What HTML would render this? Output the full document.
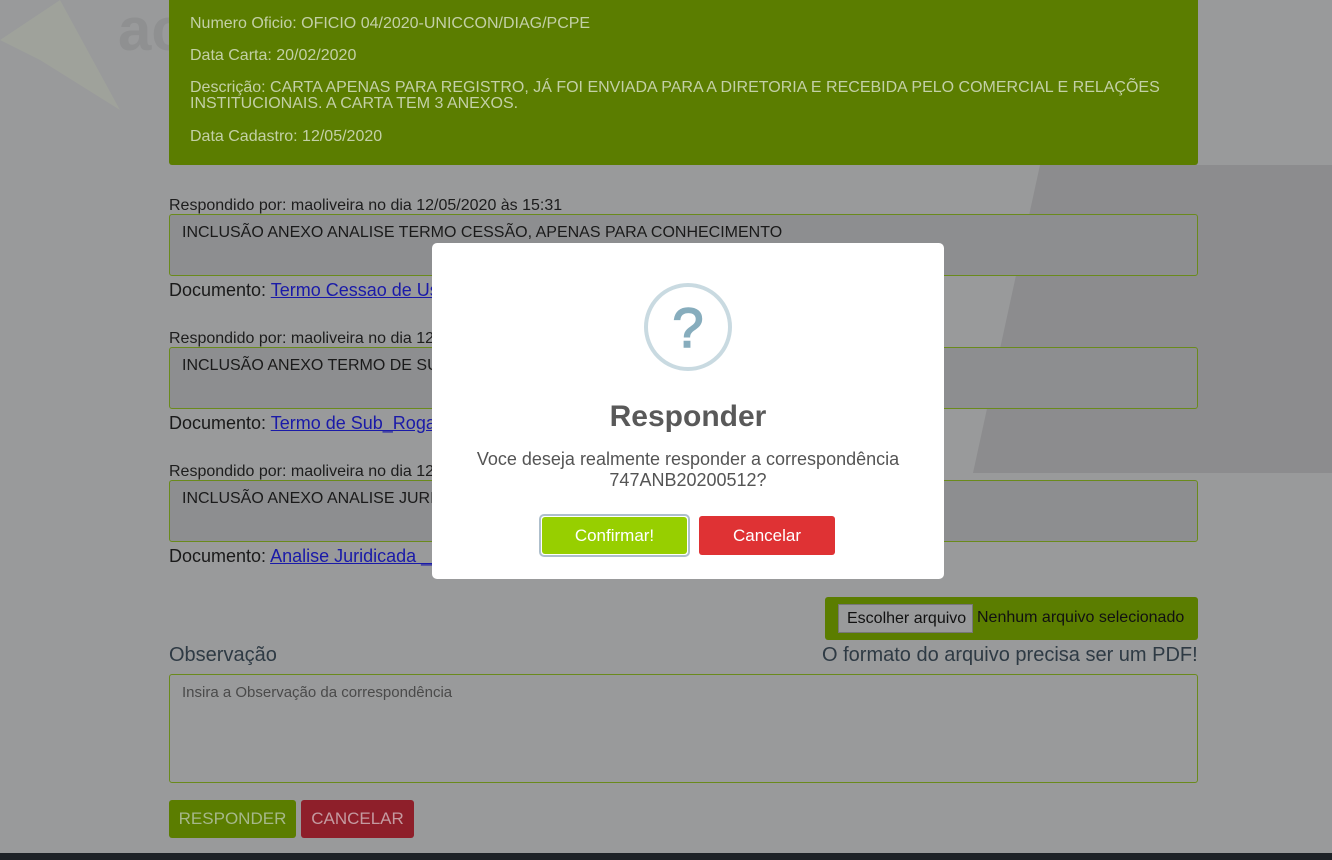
<!DOCTYPE html>
<html><head><meta charset="utf-8"><style>
*{box-sizing:border-box;margin:0;padding:0}
body{width:1332px;height:860px;overflow:hidden;background:#999a9b;font-family:"Liberation Sans",sans-serif;position:relative}
.abs{position:absolute}
.g{color:#c3d0a6;font-size:16px;white-space:nowrap}
.lab{font-size:16px;color:#1d1d1d}
.ta{position:absolute;left:169px;width:1029px;height:62px;background:#8d8e90;border:1px solid #6a8a1c;border-radius:3px;font-size:16px;color:#1a1a1a;padding:9px 12px}
.doc{font-size:18px;color:#1a1a1a}
.doc a{color:#1a1aa8;text-decoration:underline}
</style></head><body>
<svg class="abs" style="left:0;top:0" width="1332" height="860">
<polygon points="1040,165 1332,165 1332,473 973,473" fill="#8c8c8e"/>
<polygon points="0,40 60,0 120,110 40,60" fill="#9fa29b"/>
</svg>
<div class="abs" style="left:118px;top:0px;font-size:60px;font-weight:bold;color:#8f9091;line-height:60px">ac</div>
<div class="abs" style="left:169px;top:-10px;width:1029px;height:175px;background:#5b7d00;border-radius:3px"></div>
<div class="abs g" style="left:190px;top:15px">Numero Oficio: OFICIO 04/2020-UNICCON/DIAG/PCPE</div>
<div class="abs g" style="left:190px;top:47px">Data Carta: 20/02/2020</div>
<div class="abs g" style="left:190px;top:80px;line-height:16px">Descrição: CARTA APENAS PARA REGISTRO, JÁ FOI ENVIADA PARA A DIRETORIA E RECEBIDA PELO COMERCIAL E RELAÇÕES<br>INSTITUCIONAIS. A CARTA TEM 3 ANEXOS.</div>
<div class="abs g" style="left:190px;top:128px">Data Cadastro: 12/05/2020</div>

<div class="abs lab" style="left:169px;top:197px">Respondido por: maoliveira no dia 12/05/2020 às 15:31</div>
<div class="ta" style="top:214px">INCLUSÃO ANEXO ANALISE TERMO CESSÃO, APENAS PARA CONHECIMENTO</div>
<div class="abs doc" style="left:169px;top:280px">Documento: <a>Termo Cessao de Uso</a></div>

<div class="abs lab" style="left:169px;top:330px">Respondido por: maoliveira no dia 12/05/2020 às 15:31</div>
<div class="ta" style="top:347px">INCLUSÃO ANEXO TERMO DE SUB</div>
<div class="abs doc" style="left:169px;top:413px">Documento: <a>Termo de Sub_Rogacao</a></div>

<div class="abs lab" style="left:169px;top:463px">Respondido por: maoliveira no dia 12/05/2020 às 15:31</div>
<div class="ta" style="top:480px">INCLUSÃO ANEXO ANALISE JURIDICA</div>
<div class="abs doc" style="left:169px;top:546px">Documento: <a>Analise Juridicada __</a></div>

<div class="abs" style="left:825px;top:597px;width:373px;height:43px;background:#5b7d00;border-radius:3px"></div>
<div class="abs" style="left:838px;top:604px;width:135px;height:29px;background:#999a9b;border:1px solid #777;font-size:16px;color:#111;padding:5px 8px;white-space:nowrap">Escolher arquivo</div>
<div class="abs" style="left:977px;top:609px;font-size:16px;color:#111;white-space:nowrap">Nenhum arquivo selecionado</div>
<div class="abs" style="left:169px;top:644px;font-size:20px;color:#2e3a44">Observação</div>
<div class="abs" style="left:822px;top:644px;font-size:20px;color:#2e3a44;white-space:nowrap">O formato do arquivo precisa ser um PDF!</div>
<div class="ta" style="top:674px;height:109px;background:#999a9b;color:#4a4a4a;font-size:15px">Insira a Observação da correspondência</div>
<div class="abs" style="left:169px;top:800px;width:127px;height:38px;background:#5b7d00;border-radius:3px;color:#a6b88a;font-size:17px;text-align:center;line-height:38px">RESPONDER</div>
<div class="abs" style="left:301px;top:800px;width:113px;height:38px;background:#8e1f2a;border-radius:3px;color:#c49aa0;font-size:17px;text-align:center;line-height:38px">CANCELAR</div>
<div class="abs" style="left:0;top:853px;width:1332px;height:7px;background:#1e2227"></div>

<div class="abs" style="left:432px;top:243px;width:512px;height:336px;background:#fff;border-radius:5px"></div>
<div class="abs" style="left:644px;top:283px;width:88px;height:88px;border:4px solid #c9dae1;border-radius:50%;color:#87adbd;font-size:56px;text-align:center;line-height:82px;-webkit-text-stroke:1.5px #87adbd">?</div>
<div class="abs" style="left:432px;top:400px;width:512px;text-align:center;font-size:30px;font-weight:bold;color:#595959">Responder</div>
<div class="abs" style="left:432px;top:449px;width:512px;text-align:center;font-size:18px;color:#545454;line-height:21px">Voce deseja realmente responder a correspondência<br>747ANB20200512?</div>
<div class="abs" style="left:539px;top:514px;width:151px;height:43px;border:2px solid #aebfcc;border-radius:5px"></div>
<div class="abs" style="left:542px;top:517px;width:145px;height:37px;background:#97cf00;border-radius:3px;color:#fff;font-size:17px;text-align:center;line-height:37px">Confirmar!</div>
<div class="abs" style="left:699px;top:516px;width:136px;height:39px;background:#df3234;border-radius:3px;color:#fff;font-size:17px;text-align:center;line-height:39px">Cancelar</div>
</body></html>
